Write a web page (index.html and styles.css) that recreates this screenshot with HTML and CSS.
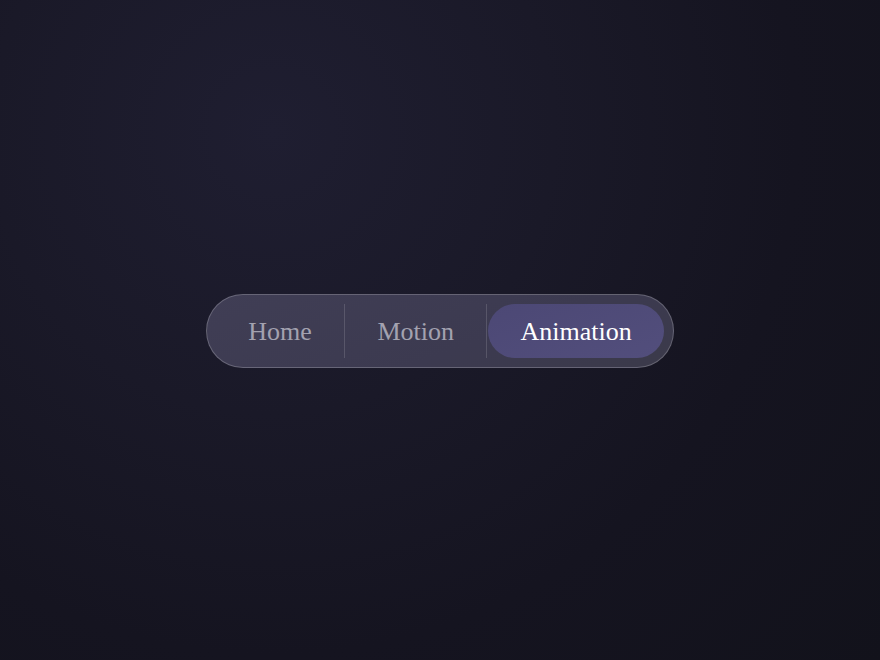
FILE: index.html
```html
<!DOCTYPE html>
<html lang="en">
<head>
<meta charset="utf-8">
<title>Segmented nav</title>
<link rel="stylesheet" href="styles.css">
</head>
<body>
<nav class="seg">
  <a class="seg-item">Home</a>
  <span class="seg-div"></span>
  <a class="seg-item">Motion</a>
  <span class="seg-div"></span>
  <a class="seg-item is-active">Animation</a>
</nav>
</body>
</html>
```
FILE: styles.css
```css
html, body {
  margin: 0;
  height: 100%;
}
body {
  box-sizing: border-box;
  padding-top: 2px;
  display: flex;
  align-items: center;
  justify-content: center;
  background: radial-gradient(circle at 31% 20%, #1f1e31 0%, #1a1928 35%, #151420 65%, #12121b 100%);
  font-family: "Liberation Serif", "Times New Roman", serif;
}
.seg {
  display: flex;
  align-items: center;
  padding: 9px;
  border: 1.5px solid rgba(255, 255, 255, 0.21);
  border-radius: 40px;
  background: linear-gradient(160deg, #403e55 0%, #3c3a50 60%, #3b3a4a 100%);
}
.seg-item {
  box-sizing: border-box;
  display: flex;
  align-items: center;
  height: 54px;
  padding: 2px 32px 0;
  font-size: 26px;
  color: #a3a2b0;
  border-radius: 27px;
}
.seg-item.is-active {
  background: linear-gradient(160deg, #4c4875 0%, #524e7c 100%);
  color: #ffffff;
  margin-left: 1px;
}
.seg-div {
  width: 1.5px;
  height: 54px;
  background: rgba(255, 255, 255, 0.14);
}
```
